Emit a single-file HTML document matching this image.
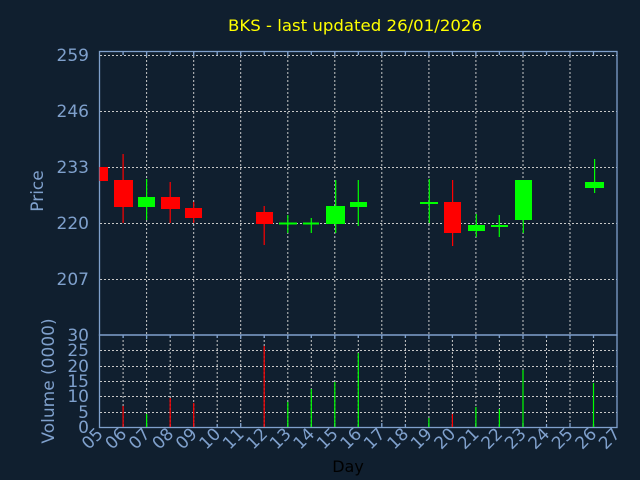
<!DOCTYPE html>
<html><head><meta charset="utf-8"><style>
html,body{margin:0;padding:0;background:#101f2f;}
svg{display:block}
text{font-family:"DejaVu Sans","Liberation Sans",sans-serif;}
</style></head><body>
<svg width="640" height="480" viewBox="0 0 640 480" xmlns="http://www.w3.org/2000/svg">
<rect width="640" height="480" fill="#101f2f"/>
<text x="355" y="31" fill="#ffff00" font-size="16" text-anchor="middle" textLength="254" lengthAdjust="spacingAndGlyphs">BKS - last updated 26/01/2026</text>
<g stroke="#c8c8c8" stroke-width="1" stroke-dasharray="2,2" fill="none">
<path d="M100 55.5H617M100 111.5H617M100 167.5H617M100 223.5H617M100 279.5H617"/>
<path d="M146.6 52V335M193.7 52V335M240.7 52V335M287.8 52V335M334.8 52V335M381.8 52V335M428.9 52V335M475.9 52V335M523 52V335M570 52V335"/>
<path d="M100 350.5H617M100 366.5H617M100 381.5H617M100 396.5H617M100 412.5H617"/>
<path d="M123.1 336V427M146.6 336V427M170.2 336V427M193.7 336V427M217.2 336V427M240.7 336V427M264.2 336V427M287.8 336V427M311.3 336V427M334.8 336V427M358.3 336V427M381.8 336V427M405.4 336V427M428.9 336V427M452.4 336V427M475.9 336V427M499.4 336V427M523 336V427M546.5 336V427M570 336V427M593.5 336V427"/>
</g>
<g stroke="#7fa0cc" stroke-width="1.3" fill="none">
<rect x="99.5" y="51.5" width="517.5" height="283.5"/>
<rect x="99.5" y="335" width="517.5" height="92.5"/>
<path d="M123.1 52v3M146.6 52v4M170.2 52v3M193.7 52v4M217.2 52v3M240.7 52v4M264.2 52v3M287.8 52v4M311.3 52v3M334.8 52v4M358.3 52v3M381.8 52v4M405.4 52v3M428.9 52v4M452.4 52v3M475.9 52v4M499.4 52v3M523 52v4M546.5 52v3M570 52v4M593.5 52v3"/>
<path d="M123.1 335v3M146.6 335v4M170.2 335v3M193.7 335v4M217.2 335v3M240.7 335v4M264.2 335v3M287.8 335v4M311.3 335v3M334.8 335v4M358.3 335v3M381.8 335v4M405.4 335v3M428.9 335v4M452.4 335v3M475.9 335v4M499.4 335v3M523 335v4M546.5 335v3M570 335v4M593.5 335v3"/>
<path d="M123.1 427v-3M146.6 427v-4M170.2 427v-3M193.7 427v-4M217.2 427v-3M240.7 427v-4M264.2 427v-3M287.8 427v-4M311.3 427v-3M334.8 427v-4M358.3 427v-3M381.8 427v-4M405.4 427v-3M428.9 427v-4M452.4 427v-3M475.9 427v-4M499.4 427v-3M523 427v-4M546.5 427v-3M570 427v-4M593.5 427v-3"/>
</g>
<g fill="#7fa0cc" font-size="17" text-anchor="end">
<text x="89" y="61">259</text><text x="89" y="117">246</text><text x="89" y="173">233</text><text x="89" y="229">220</text><text x="89" y="285">207</text>
<text x="89" y="341">30</text><text x="89" y="356">25</text><text x="89" y="372">20</text><text x="89" y="387">15</text><text x="89" y="402">10</text><text x="89" y="418">5</text><text x="89" y="433">0</text>
</g>
<text transform="translate(43,191) rotate(-90)" fill="#7fa0cc" font-size="17" text-anchor="middle">Price</text>
<text transform="translate(54,381) rotate(-90)" fill="#7fa0cc" font-size="17" text-anchor="middle">Volume (0000)</text>
<text x="348" y="472" fill="#000" font-size="16" text-anchor="middle">Day</text>
<g fill="#7fa0cc" font-size="17" text-anchor="end">
<text transform="translate(104,435) rotate(-45)">05</text>
<text transform="translate(127.5,435) rotate(-45)">06</text>
<text transform="translate(151,435) rotate(-45)">07</text>
<text transform="translate(174.5,435) rotate(-45)">08</text>
<text transform="translate(198,435) rotate(-45)">09</text>
<text transform="translate(221.5,435) rotate(-45)">10</text>
<text transform="translate(245,435) rotate(-45)">11</text>
<text transform="translate(268.5,435) rotate(-45)">12</text>
<text transform="translate(292,435) rotate(-45)">13</text>
<text transform="translate(315.5,435) rotate(-45)">14</text>
<text transform="translate(339,435) rotate(-45)">15</text>
<text transform="translate(362.5,435) rotate(-45)">16</text>
<text transform="translate(386,435) rotate(-45)">17</text>
<text transform="translate(409.5,435) rotate(-45)">18</text>
<text transform="translate(433,435) rotate(-45)">19</text>
<text transform="translate(456.5,435) rotate(-45)">20</text>
<text transform="translate(480,435) rotate(-45)">21</text>
<text transform="translate(503.5,435) rotate(-45)">22</text>
<text transform="translate(527,435) rotate(-45)">23</text>
<text transform="translate(550.5,435) rotate(-45)">24</text>
<text transform="translate(574,435) rotate(-45)">25</text>
<text transform="translate(597.5,435) rotate(-45)">26</text>
<text transform="translate(621,435) rotate(-45)">27</text>
</g>
<g stroke="#ff0000" stroke-width="1.2">
<path d="M123.1 154V223M170.2 182V223M193.7 202V223M264.2 206V245M452.6 180V246"/>
<path d="M123.1 427V406M170.2 427V398M193.7 427V403M264.2 427V346M452.4 427V414"/>
</g>
<g stroke="#00ff00" stroke-width="1.2">
<path d="M146.6 179V220M287.8 215V233M311.3 218V233M335.7 180V233M358.3 180V226M429.3 179V223M476.3 214V237M499.3 215V237M523.3 180V233M594.6 159V193"/>
<path d="M146.6 427V414M287.8 427V402M311.3 427V389M334.8 427V382M358.3 427V353M428.9 427V418M475.9 427V407M499.4 427V409M523 427V370M593.5 427V383"/>
</g>
<g fill="#ff0000">
<rect x="99.5" y="167" width="8.5" height="14"/>
<rect x="114" y="180" width="19" height="27"/>
<rect x="161" y="197" width="19" height="12"/>
<rect x="185" y="208" width="17" height="10"/>
<rect x="256" y="212" width="17" height="12"/>
<rect x="444" y="202" width="17" height="31"/>
</g>
<g fill="#00ff00">
<rect x="138" y="197" width="17" height="10"/>
<rect x="279" y="222.5" width="18" height="2"/>
<rect x="303" y="222.5" width="16" height="2"/>
<rect x="326" y="206" width="19" height="18"/>
<rect x="350" y="202" width="17" height="5"/>
<rect x="420" y="202" width="18" height="2"/>
<rect x="468" y="225" width="17" height="6"/>
<rect x="491" y="225" width="17" height="2"/>
<rect x="515" y="180" width="17" height="40"/>
<rect x="585" y="182" width="19" height="6"/>
</g>
</svg>
</body></html>
